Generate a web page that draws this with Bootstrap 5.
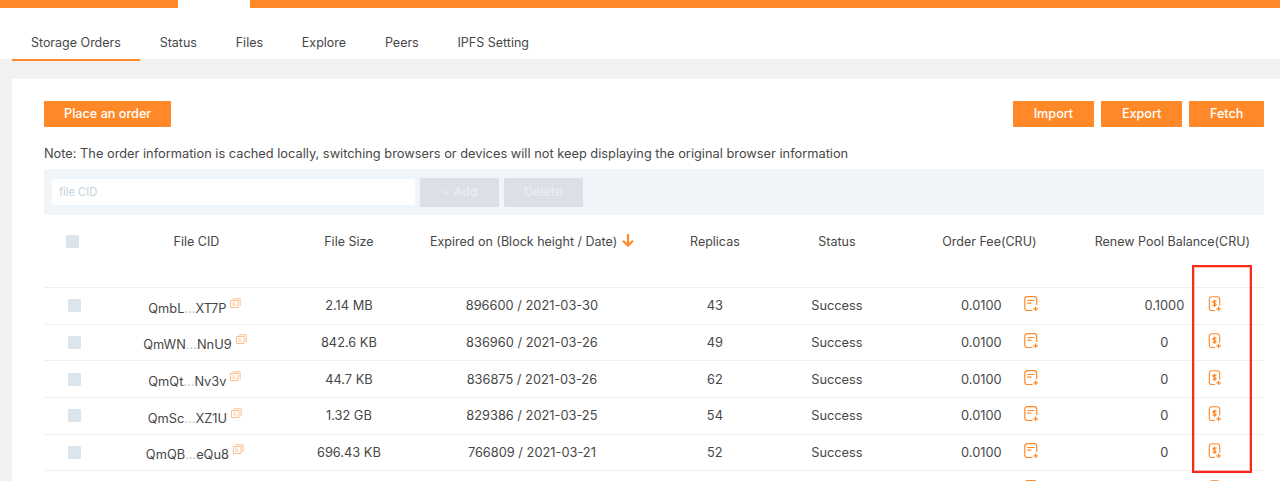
<!DOCTYPE html>
<html lang="en">
<head>
<meta charset="utf-8">
<meta name="viewport" content="width=device-width, initial-scale=1">
<title>Storage Orders</title>
<link href="https://cdn.jsdelivr.net/npm/bootstrap@5.3.0/dist/css/bootstrap.min.css" rel="stylesheet">
<style>
  :root { --brand: #ff8929; }
  body { font-family: Inter, "Liberation Sans", sans-serif; font-size: 12.82px; line-height: 18px; color: #474747; background: #f3f2f0; height: 481px; overflow: hidden; }
  .topbar { height: 8px; background: var(--brand); }
  .topbar-tab { width: 71.5px; height: 8px; margin-left: 178px; background: #fff; }
  .tabs { height: 50.5px; padding-left: 11.5px; font-size: 12.5px; }
  .tabs .nav-link { color: #474747; padding: 25.5px 19.4px 0; height: 53px; border-radius: 0; }
  .tabs .nav-link.active { border-bottom: 2px solid var(--brand); }
  .panel { margin: 20.5px 0 0 11.5px; padding: 22px 16.1px 0 32.4px; height: 402px; overflow: hidden; }
  .btn-brand { --bs-btn-color: #fff; --bs-btn-bg: var(--brand); --bs-btn-border-color: var(--brand); --bs-btn-hover-bg: #f07a1a; --bs-btn-hover-color: #fff; height: 25.5px; padding: 0; border: 0; border-radius: 1px; font-size: 12.65px; line-height: 25px; font-weight: 500; }
  .w-order { width: 127.5px; } .w-port { width: 81px; } .w-fetch { width: 74.5px; }
  .gap-btn { gap: 7.25px; }
  .note { margin-top: 18px; height: 18px; }
  .addbar { margin-top: 6.5px; height: 46px; background: #f0f5fa; padding-left: 8.6px; gap: 4.7px; }
  .addbar .form-control { width: 363px; height: 26px; border: 0; border-radius: 2px; padding: 0 6.5px; font-size: 11.1px; }
  .addbar .form-control::placeholder { color: #c6d1da; opacity: 1; }
  .btn-muted { width: 79px; height: 29px; padding: 0; border: 0; border-radius: 1px; background: #dcdfe7 !important; color: #ededf0 !important; opacity: 1 !important; font-size: 12.3px; font-weight: 500; letter-spacing: .2px; }
  .orders { table-layout: fixed; width: 1220px; border-collapse: separate; border-spacing: 0; text-align: center; }
  .orders th { font-size: 12.5px; font-weight: 400; height: 73px; padding: 17.6px 0 0; vertical-align: top; border-bottom: 1px solid #efefef; white-space: nowrap; }
  .orders td { height: 36.67px; padding: 1px 0 0; vertical-align: middle; border-bottom: 1px solid #efefef; white-space: nowrap; }
  .check { display: inline-block; width: 13px; height: 13px; border-radius: 1px; background: #dce5eb; vertical-align: -2px; }
  .orders .cid { padding: 4px 3px 0 0; }
  .cid span { color: #c4c4c4; }
  .cid svg { margin-left: 4px; vertical-align: 4px; opacity: .55; }
  .arrow { margin-left: 1px; margin-top: -4px; }
  .amount { width: 61px; margin-left: 53px; margin-right: 12px; }
  .amount + svg { margin-top: -4px; }
  .renew .amount { margin-right: 12.8px; }
  .marker { left: 1192px; top: 265px; width: 60px; height: 208px; border: 2px solid #fb2a18; box-shadow: inset 0 0 0 1px rgba(251, 42, 24, .3); }
</style>
</head>
<body class="position-relative">
<svg class="d-none">
  <symbol id="copy" viewBox="0 0 11 11"><g fill="none" stroke="#ff8929"><path d="M.5 2.5h7.5v7h-7.5z"/><path d="M2.5.8h7.6v7.4"/><path d="M2 5h3M2 7h4" stroke-width=".8"/></g></symbol>
  <symbol id="bill" viewBox="0 0 15 16"><g fill="none" stroke="#ff8929" stroke-width="1.2"><path d="M8.5 14.5H3.4A2.6 2.6 0 0 1 .8 12V3.2A2.6 2.6 0 0 1 3.4.7h6.7a2.6 2.6 0 0 1 2.6 2.5V9"/><path d="M3.2 4.5h7.2M3.2 7.2h4.2"/><path d="M11.6 10.5v4.6M9.3 12.8h4.6" stroke-width="1.3"/></g></symbol>
  <symbol id="money" viewBox="0 0 13 16"><g fill="none" stroke="#ff8929" stroke-width="1.1"><path d="M6.5 14.5H3.2A2.4 2.4 0 0 1 .8 12V3.2A2.4 2.4 0 0 1 3.2.7h5.6a2.4 2.4 0 0 1 2.4 2.5V9.5"/><path d="M7.7 5.7C7.3 4.6 4.4 4.6 4.4 5.9S7.6 7 7.6 8.6 4.5 9.9 4.2 8.7M6 3.7v7.2" stroke-width="1.2"/><path d="M10.1 10.5v4.6M7.8 12.8h4.6" stroke-width="1.3"/></g></symbol>
</svg>
<div class="topbar"><div class="topbar-tab"></div></div>
<nav class="nav tabs bg-white flex-nowrap">
  <a class="nav-link active" href="#">Storage Orders</a>
  <a class="nav-link" href="#">Status</a>
  <a class="nav-link" href="#">Files</a>
  <a class="nav-link" href="#">Explore</a>
  <a class="nav-link" href="#">Peers</a>
  <a class="nav-link" href="#">IPFS Setting</a>
</nav>
<main class="panel bg-white">
  <div class="d-flex gap-btn">
    <button class="btn btn-brand w-order me-auto">Place an order</button>
    <button class="btn btn-brand w-port">Import</button>
    <button class="btn btn-brand w-port">Export</button>
    <button class="btn btn-brand w-fetch">Fetch</button>
  </div>
  <div class="note">Note: The order information is cached locally, switching browsers or devices will not keep displaying the original browser information</div>
  <div class="addbar d-flex align-items-center">
    <input class="form-control" placeholder="file CID">
    <button class="btn btn-muted" disabled>+ Add</button>
    <button class="btn btn-muted" disabled>Delete</button>
  </div>
  <table class="orders">
    <colgroup><col style="width:5%"><col style="width:15%"><col style="width:10%"><col style="width:20%"><col style="width:10%"><col style="width:10%"><col style="width:15%"><col style="width:15%"></colgroup>
    <thead><tr>
      <th class="pe-1"><i class="check"></i></th><th>File CID</th><th>File Size</th>
      <th>Expired on (Block height / Date) <svg class="arrow" width="12" height="13" viewBox="0 0 12 13" fill="none" stroke="#ff8929" stroke-width="2.2"><path d="M6 0v11.5M1 6.8l5 4.8 5-4.8"/></svg></th>
      <th>Replicas</th><th>Status</th><th>Order Fee(CRU)</th><th>Renew Pool Balance(CRU)</th>
    </tr></thead>
    <tbody id="rows"></tbody>
  </table>
</main>
<div class="marker position-absolute"></div>
<script>
  const orders = [
    ["QmbL", "XT7P", "2.14 MB", "896600 / 2021-03-30", 43, "0.1000"],
    ["QmWN", "NnU9", "842.6 KB", "836960 / 2021-03-26", 49, "0"],
    ["QmQt", "Nv3v", "44.7 KB", "836875 / 2021-03-26", 62, "0"],
    ["QmSc", "XZ1U", "1.32 GB", "829386 / 2021-03-25", 54, "0"],
    ["QmQB", "eQu8", "696.43 KB", "766809 / 2021-03-21", 52, "0"]
  ];
  const icon = (id, w, h) => `<svg width="${w}" height="${h}"><use href="#${id}"/></svg>`;
  const amount = (v, ic, cls = "fee") => `<td class="${cls}"><div class="d-flex align-items-center"><span class="amount">${v}</span>${ic}</div></td>`;
  const bill = icon("bill", 15, 16), money = icon("money", 14, 16);
  document.getElementById("rows").innerHTML = orders.map(o => `<tr>
    <td><i class="check"></i></td>
    <td class="cid">${o[0]}<span>...</span>${o[1]}${icon("copy", 11, 11)}</td>
    <td>${o[2]}</td><td>${o[3]}</td><td>${o[4]}</td><td>Success</td>
    ${amount("0.0100", bill)}${amount(o[5], money, "renew")}</tr>`).join("") +
    `<tr><td colspan="6"></td>${amount("", bill)}${amount("", money, "renew")}</tr>`;
</script>
<script src="https://cdn.jsdelivr.net/npm/bootstrap@5.3.0/dist/js/bootstrap.bundle.min.js"></script>
</body>
</html>
